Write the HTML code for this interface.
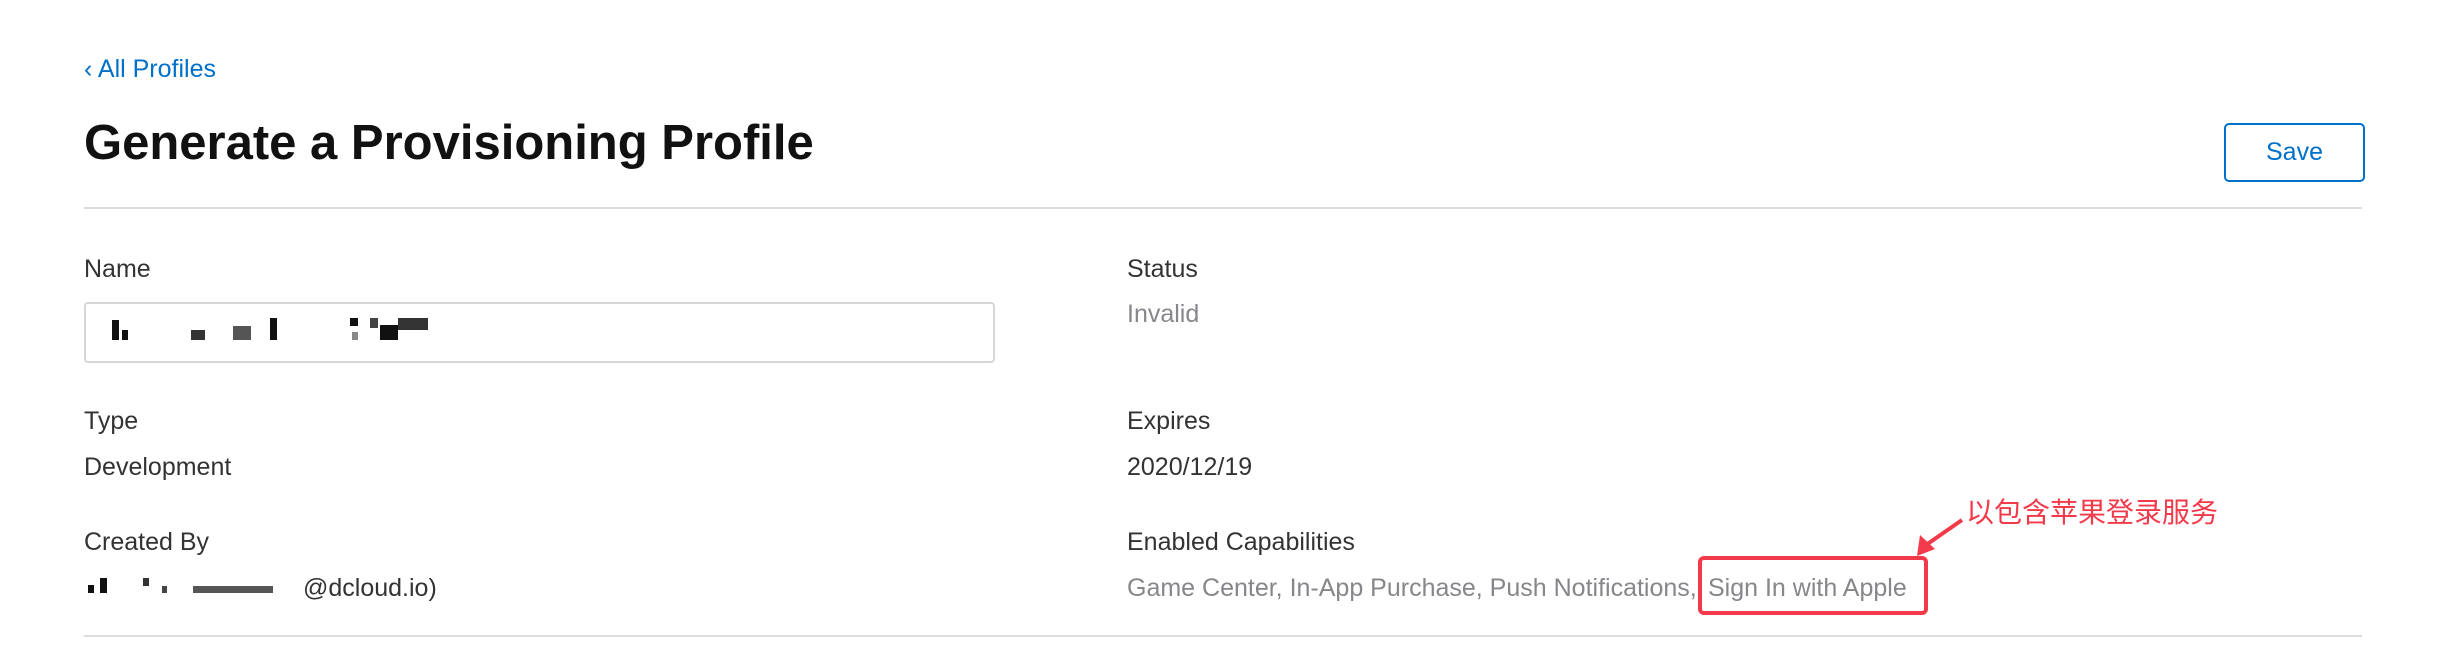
<!DOCTYPE html>
<html><head><meta charset="utf-8"><style>
body{margin:0;width:2462px;height:662px;background:#fff;position:relative;overflow:hidden;font-family:"Liberation Sans","Noto Sans CJK SC",sans-serif;color:#1d1d1f}
.a{position:absolute;white-space:nowrap}
.lab{font-size:25px;color:#333;line-height:1}
.val{font-size:25px;color:#333;line-height:1}
.gray{color:#86868b}
.hr{position:absolute;left:84px;width:2278px;height:2px;background:#dcdcdc}
.px{position:absolute;background:#111}
</style></head><body>
<div class="a" style="left:84px;top:55px;font-size:25px;color:#0070c9">‹ All Profiles</div>
<div class="a" style="left:84px;top:115px;font-size:49px;font-weight:bold;color:#111">Generate a Provisioning Profile</div>
<div class="a" style="left:2224px;top:123px;width:137px;height:55px;border:2px solid #0070c9;border-radius:5px;color:#0070c9;font-size:25px;text-align:center;line-height:55px">Save</div>
<div class="hr" style="top:207px"></div>

<div class="a lab" style="left:84px;top:257px">Name</div>
<div class="a" style="left:84px;top:302px;width:907px;height:57px;border:2px solid #d6d6d6;border-radius:4px"></div>
<div class="px" style="left:112px;top:320px;width:7px;height:20px"></div>
<div class="px" style="left:122px;top:330px;width:6px;height:10px"></div>
<div class="px" style="left:191px;top:330px;width:14px;height:10px;background:#333"></div>
<div class="px" style="left:233px;top:326px;width:18px;height:14px;background:#555"></div>
<div class="px" style="left:270px;top:318px;width:7px;height:22px"></div>
<div class="px" style="left:350px;top:318px;width:8px;height:8px"></div>
<div class="px" style="left:370px;top:318px;width:8px;height:10px;background:#444"></div>
<div class="px" style="left:380px;top:325px;width:18px;height:15px"></div>
<div class="px" style="left:398px;top:318px;width:30px;height:12px;background:#333"></div>
<div class="px" style="left:352px;top:332px;width:6px;height:8px;background:#888"></div>

<div class="a lab" style="left:84px;top:409px">Type</div>
<div class="a val" style="left:84px;top:455px">Development</div>
<div class="a lab" style="left:84px;top:530px">Created By</div>
<div class="px" style="left:88px;top:585px;width:6px;height:8px"></div>
<div class="px" style="left:100px;top:578px;width:7px;height:15px"></div>
<div class="px" style="left:143px;top:578px;width:6px;height:8px;background:#333"></div>
<div class="px" style="left:162px;top:586px;width:5px;height:7px;background:#444"></div>
<div class="px" style="left:193px;top:586px;width:80px;height:7px;background:#555"></div>
<div class="a val" style="left:303px;top:576px">@dcloud.io)</div>

<div class="a lab" style="left:1127px;top:257px">Status</div>
<div class="a val gray" style="left:1127px;top:302px">Invalid</div>
<div class="a lab" style="left:1127px;top:409px">Expires</div>
<div class="a val" style="left:1127px;top:455px">2020/12/19</div>
<div class="a lab" style="left:1127px;top:530px">Enabled Capabilities</div>
<div class="a val gray" style="left:1127px;top:576px">Game Center, In-App Purchase, Push Notifications,</div>
<div class="a val gray" style="left:1708px;top:576px">Sign In with Apple</div>
<div class="a" style="left:1698px;top:556px;width:222px;height:51px;border:4px solid #f33a4a;border-radius:6px"></div>
<div class="a" style="left:1966px;top:499px;font-size:28px;color:#f33a4a;line-height:1">以包含苹果登录服务</div>
<svg class="a" style="left:0;top:0" width="2462" height="662"><line x1="1962" y1="520" x2="1926" y2="545" stroke="#f33a4a" stroke-width="4"/><polygon points="1917,556 1920,535 1935,549" fill="#f33a4a"/></svg>
<div class="hr" style="top:635px"></div>
</body></html>
